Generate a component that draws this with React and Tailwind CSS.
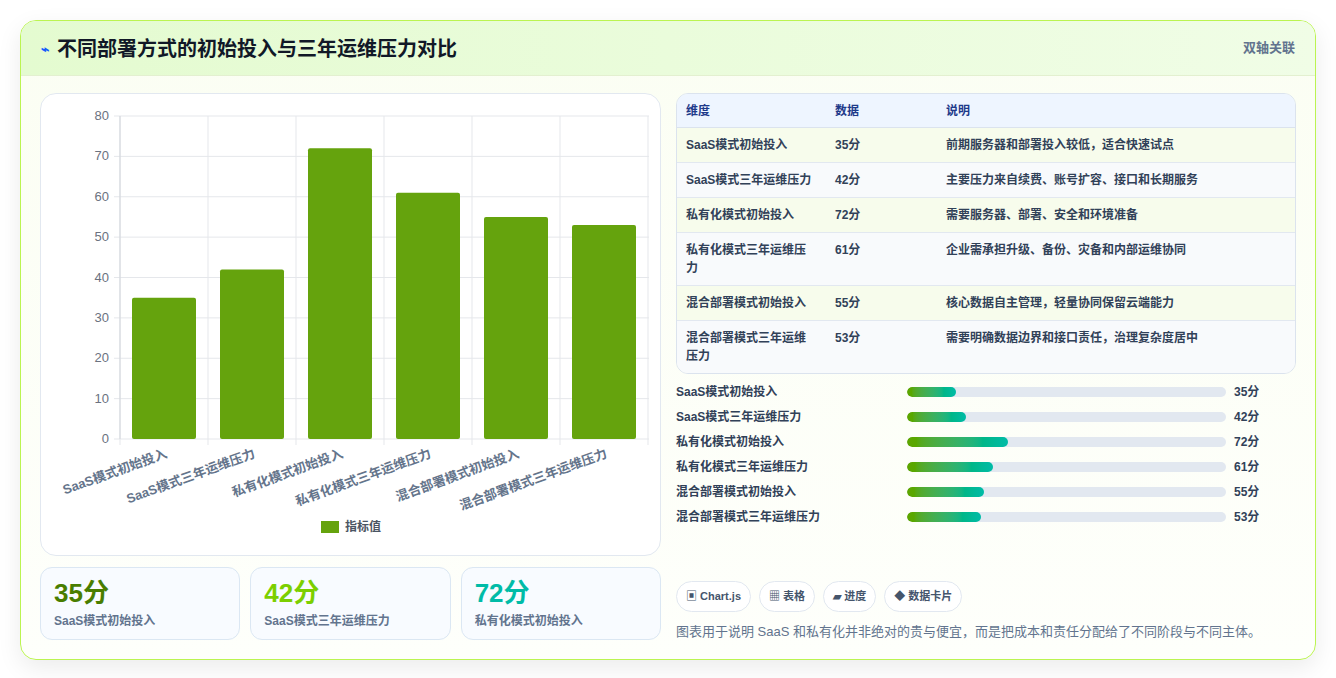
const data = [
  { k: "SaaS模式初始投入", v: 35, d: "前期服务器和部署投入较低，适合快速试点" },
  { k: "SaaS模式三年运维压力", v: 42, d: "主要压力来自续费、账号扩容、接口和长期服务" },
  { k: "私有化模式初始投入", v: 72, d: "需要服务器、部署、安全和环境准备" },
  { k: "私有化模式三年运维压力", v: 61, d: "企业需承担升级、备份、灾备和内部运维协同" },
  { k: "混合部署模式初始投入", v: 55, d: "核心数据自主管理，轻量协同保留云端能力" },
  { k: "混合部署模式三年运维压力", v: 53, d: "需要明确数据边界和接口责任，治理复杂度居中" },
];

const font = { fontFamily: '"Liberation Sans", "Noto Sans CJK SC", sans-serif' };

function Chart() {
  const x0 = 79, top = 22, bottom = 345, w = 88;
  const sy = (bottom - top) / 80;
  return (
    <svg width="620" height="461" className="block">
      {[0, 10, 20, 30, 40, 50, 60, 70, 80].map((t) => {
        const y = bottom - t * sy;
        return (
          <g key={t}>
            <line x1={x0 - 6} x2={608} y1={y} y2={y} stroke="#e5e7eb" />
            <text x={x0 - 11} y={y + 4} textAnchor="end" fontSize="13" fill="#6b7280">{t}</text>
          </g>
        );
      })}
      {[0, 1, 2, 3, 4, 5, 6].map((i) => (
        <line key={i} x1={x0 + i * w} x2={x0 + i * w} y1={top} y2={bottom + 6} stroke="#e5e7eb" />
      ))}
      <line x1={x0} x2={x0} y1={top} y2={bottom} stroke="#d1d5db" />
      {data.map((r, i) => {
        const h = r.v * sy;
        return <rect key={r.k} x={x0 + i * w + 12} y={bottom - h} width="64" height={h} rx="2" fill="#65a30d" />;
      })}
      {data.map((r, i) => (
        <text key={r.k} transform={`translate(${x0 + i * w + 48},${bottom + 18}) rotate(-20)`} textAnchor="end" fontSize="13" fontWeight="600" fill="#64748b">{r.k}</text>
      ))}
      <rect x="280" y="427" width="18" height="12" fill="#65a30d" />
      <text x="304" y="437" fontSize="12" fontWeight="600" fill="#4b5563">指标值</text>
    </svg>
  );
}

export default function App() {
  return (
    <div className="min-h-screen bg-white p-5" style={font}>
      <div className="overflow-hidden rounded-2xl border border-lime-300 bg-gradient-to-b from-[#fbfef3] to-[#fefffb] shadow-[0_8px_24px_rgba(0,0,0,0.08)]">
        <div className="flex h-[55px] items-center justify-between border-b border-[#e3f0d0] bg-gradient-to-r from-[#e4fbd0] to-[#f0fde6] px-5">
          <div className="flex items-center gap-2 text-[20px] font-semibold text-[#111827]" style={{ fontFamily: '"Noto Sans CJK SC", sans-serif' }}>
            <span className="text-[14px] font-bold text-blue-600">⌁</span>不同部署方式的初始投入与三年运维压力对比
          </div>
          <div className="text-[13px] font-semibold text-slate-500">双轴关联</div>
        </div>
        <div className="flex gap-[15px] px-[19px] pb-[18px] pt-[17px]">
          <div className="w-[621px] shrink-0">
            <div className="rounded-2xl border border-[#e2e8f0] bg-white">
              <Chart />
            </div>
            <div className="mt-[11px] grid grid-cols-3 gap-[10px]">
              {[["35分", "text-lime-700", 0], ["42分", "text-lime-500", 1], ["72分", "text-teal-500", 2]].map(([v, c, i]) => (
                <div key={v} className="h-[73px] rounded-xl border border-[#dbe7f3] bg-[#f8fbff] px-[13px] pt-[9px]">
                  <div className={`text-[26px] font-bold leading-8 ${c}`}>{v}</div>
                  <div className="mt-[3px] text-[12px] font-semibold text-slate-500">{data[i].k}</div>
                </div>
              ))}
            </div>
          </div>
          <div className="flex-1">
            <div className="overflow-hidden rounded-xl border border-[#dbe3ee] text-[12px] font-semibold text-slate-700">
              <div className="flex h-[34px] items-center border-b border-[#dbe3ee] bg-[#eef5ff] px-[9px] text-[#1e3a8a]">
                <div className="w-[149px]">维度</div><div className="w-[111px]">数据</div><div>说明</div>
              </div>
              {data.map((r, i) => (
                <div key={r.k} className={`flex border-b border-[#e2e8f0] px-[9px] py-[8px] leading-[18px] last:border-b-0 ${i % 2 ? "bg-[#f8fafc]" : "bg-[#f7fcec]"}`}>
                  <div className="w-[149px] pr-5">{r.k}</div><div className="w-[111px]">{r.v}分</div><div>{r.d}</div>
                </div>
              ))}
            </div>
            <div className="mt-[9px] flex flex-col gap-[8px] text-[12px] font-semibold text-slate-700">
              {data.map((r) => (
                <div key={r.k} className="flex h-[17px] items-center">
                  <div className="w-[231px]">{r.k}</div>
                  <div className="h-[10px] w-[319px] overflow-hidden rounded-full bg-[#e2e8f0]">
                    <div className="h-full rounded-full bg-gradient-to-r from-lime-600 to-teal-500" style={{ width: `${r.v * 0.44}%` }} />
                  </div>
                  <div className="ml-2">{r.v}分</div>
                </div>
              ))}
            </div>
            <div className="mt-[56px] flex gap-2 text-[11px] font-semibold text-slate-600">
              {["▣ Chart.js", "▦ 表格", "▰ 进度", "◆ 数据卡片"].map((t) => (
                <div key={t} className="rounded-full border border-[#e2e8f0] bg-white px-[9px] py-[6px]">{t}</div>
              ))}
            </div>
            <div className="mt-[10px] text-[13px] text-slate-500">图表用于说明 SaaS 和私有化并非绝对的贵与便宜，而是把成本和责任分配给了不同阶段与不同主体。</div>
          </div>
        </div>
      </div>
    </div>
  );
}
